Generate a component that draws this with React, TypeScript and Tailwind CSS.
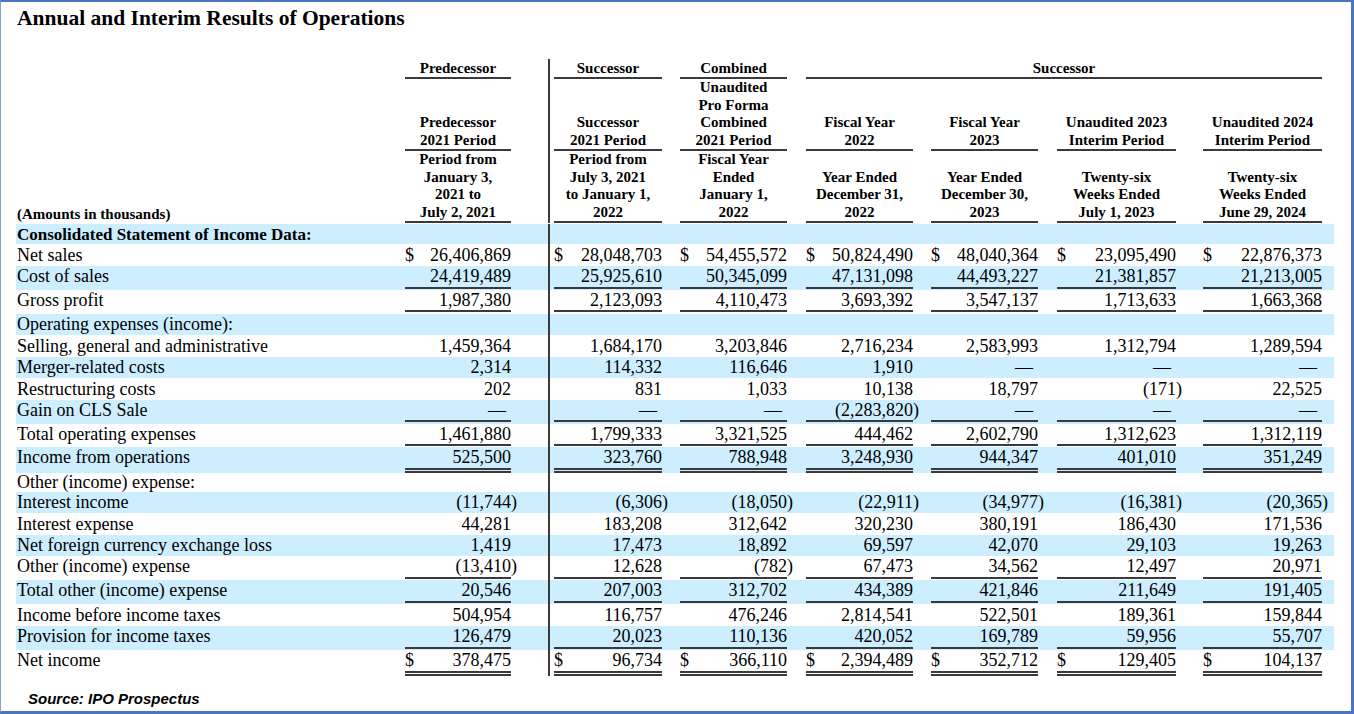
import React from "react";

type Row = {
  label: string;
  bold?: boolean;
  band?: boolean;
  th: string;
  rh: string;
  ul?: "s" | "d";
  dollar?: boolean;
  vals?: string[];
};

const COL = [
  "w-[106px]",
  "ml-[4px] w-[108px]",
  "ml-[18px] w-[107px]",
  "ml-[19px] w-[107px]",
  "ml-[18px] w-[107px]",
  "ml-[19px] w-[119px]",
  "ml-[27px] w-[119px]",
];

const ROWS: Row[] = [
  { label: "Consolidated Statement of Income Data:", bold: true, band: true, th: "h-[20px]", rh: "h-[20px]" },
  { label: "Net sales", th: "h-[22px]", rh: "h-[22px]", dollar: true, vals: ["26,406,869", "28,048,703", "54,455,572", "50,824,490", "48,040,364", "23,095,490", "22,876,373"] },
  { label: "Cost of sales", band: true, th: "h-[21px]", rh: "h-[24px]", ul: "s", vals: ["24,419,489", "25,925,610", "50,345,099", "47,131,098", "44,493,227", "21,381,857", "21,213,005"] },
  { label: "Gross profit", th: "h-[20px]", rh: "h-[24px]", ul: "s", vals: ["1,987,380", "2,123,093", "4,110,473", "3,693,392", "3,547,137", "1,713,633", "1,663,368"] },
  { label: "Operating expenses (income):", band: true, th: "h-[21px]", rh: "h-[21px]" },
  { label: "Selling, general and administrative", th: "h-[22px]", rh: "h-[22px]", vals: ["1,459,364", "1,684,170", "3,203,846", "2,716,234", "2,583,993", "1,312,794", "1,289,594"] },
  { label: "Merger-related costs", band: true, th: "h-[21px]", rh: "h-[21px]", vals: ["2,314", "114,332", "116,646", "1,910", "—", "—", "—"] },
  { label: "Restructuring costs", th: "h-[22px]", rh: "h-[22px]", vals: ["202", "831", "1,033", "10,138", "18,797", "(171)", "22,525"] },
  { label: "Gain on CLS Sale", band: true, th: "h-[20px]", rh: "h-[24px]", ul: "s", vals: ["—", "—", "—", "(2,283,820)", "—", "—", "—"] },
  { label: "Total operating expenses", th: "h-[20px]", rh: "h-[23px]", ul: "s", vals: ["1,461,880", "1,799,333", "3,321,525", "444,462", "2,602,790", "1,312,623", "1,312,119"] },
  { label: "Income from operations", band: true, th: "h-[21px]", rh: "h-[26px]", ul: "d", vals: ["525,500", "323,760", "788,948", "3,248,930", "944,347", "401,010", "351,249"] },
  { label: "Other (income) expense:", th: "h-[19px]", rh: "h-[19px]" },
  { label: "Interest income", band: true, th: "h-[21px]", rh: "h-[21px]", vals: ["(11,744)", "(6,306)", "(18,050)", "(22,911)", "(34,977)", "(16,381)", "(20,365)"] },
  { label: "Interest expense", th: "h-[22px]", rh: "h-[22px]", vals: ["44,281", "183,208", "312,642", "320,230", "380,191", "186,430", "171,536"] },
  { label: "Net foreign currency exchange loss", band: true, th: "h-[21px]", rh: "h-[21px]", vals: ["1,419", "17,473", "18,892", "69,597", "42,070", "29,103", "19,263"] },
  { label: "Other (income) expense", th: "h-[21px]", rh: "h-[24px]", ul: "s", vals: ["(13,410)", "12,628", "(782)", "67,473", "34,562", "12,497", "20,971"] },
  { label: "Total other (income) expense", band: true, th: "h-[21px]", rh: "h-[24px]", ul: "s", vals: ["20,546", "207,003", "312,702", "434,389", "421,846", "211,649", "191,405"] },
  { label: "Income before income taxes", th: "h-[22px]", rh: "h-[22px]", vals: ["504,954", "116,757", "476,246", "2,814,541", "522,501", "189,361", "159,844"] },
  { label: "Provision for income taxes", band: true, th: "h-[21px]", rh: "h-[24px]", ul: "s", vals: ["126,479", "20,023", "110,136", "420,052", "169,789", "59,956", "55,707"] },
  { label: "Net income", th: "h-[21px]", rh: "h-[26px]", ul: "d", dollar: true, vals: ["378,475", "96,734", "366,110", "2,394,489", "352,712", "129,405", "104,137"] },
];

const HB: string[][] = [
  ["Predecessor", "2021 Period"],
  ["Successor", "2021 Period"],
  ["Unaudited", "Pro Forma", "Combined", "2021 Period"],
  ["Fiscal Year", "2022"],
  ["Fiscal Year", "2023"],
  ["Unaudited 2023", "Interim Period"],
  ["Unaudited 2024", "Interim Period"],
];

const HC: string[][] = [
  ["Period from", "January 3,", "2021 to", "July 2, 2021"],
  ["Period from", "July 3, 2021", "to January 1,", "2022"],
  ["Fiscal Year", "Ended", "January 1,", "2022"],
  ["Year Ended", "December 31,", "2022"],
  ["Year Ended", "December 30,", "2023"],
  ["Twenty-six", "Weeks Ended", "July 1, 2023"],
  ["Twenty-six", "Weeks Ended", "June 29, 2024"],
];

function Divider() {
  return (
    <>
      <div className="w-[37px] shrink-0" />
      <div className="w-[2px] shrink-0 bg-[#3a3a3a]" />
    </>
  );
}

function Val({ v, dollar }: { v: string; dollar?: boolean }) {
  if (v === "—") return <span className="ml-auto pr-[5px]">—</span>;
  const neg = v.startsWith("(");
  return (
    <>
      {dollar ? <span>$</span> : <span />}
      <span className="relative">
        {neg ? v.slice(0, -1) : v}
        {neg && <span className="absolute left-full top-0">)</span>}
      </span>
    </>
  );
}

function BodyRow({ r }: { r: Row }) {
  const cells = COL.map((c, i) => (
    <React.Fragment key={i}>
      {i === 1 && <Divider />}
      <div className={`${c} shrink-0 flex flex-col`}>
        <div className={`${r.th} flex items-center justify-between`}>
          {r.vals && <Val v={r.vals[i]} dollar={r.dollar} />}
        </div>
        {r.ul === "s" && <div className="h-[2px] bg-[#3a3a3a]" />}
        {r.ul === "d" && <div className="h-[5px] border-y-2 border-[#3a3a3a]" />}
      </div>
    </React.Fragment>
  ));
  return (
    <div className={`flex w-[1318px] ${r.rh} ${r.band ? "bg-[#cceeff]" : ""}`}>
      <div
        className={`w-[389px] shrink-0 pl-[1px] flex items-center whitespace-nowrap ${r.th} ${
          r.bold ? "font-bold text-[17px]" : ""
        }`}
      >
        {r.label}
      </div>
      {cells}
    </div>
  );
}

function HeadCell({ lines, cls }: { lines: string[]; cls: string }) {
  return (
    <div className={`${cls} shrink-0 flex flex-col justify-end text-center border-b-2 border-[#3a3a3a]`}>
      {lines.map((l, i) => (
        <div key={i} className="whitespace-nowrap">
          {l}
        </div>
      ))}
    </div>
  );
}

function HeadRow({ data, label }: { data: string[][]; label?: string }) {
  return (
    <div className="flex h-[72px]">
      <div className="w-[389px] shrink-0 pl-[1px] flex items-end whitespace-nowrap">{label}</div>
      {data.map((lines, i) => (
        <React.Fragment key={i}>
          {i === 1 && <Divider />}
          <HeadCell lines={lines} cls={COL[i]} />
        </React.Fragment>
      ))}
    </div>
  );
}

export default function App() {
  return (
    <div className="w-[1354px] h-[714px] bg-white border-t-2 border-r-[3px] border-b-[3px] border-l border-[#4a74c4] border-l-[#86a2da] overflow-hidden font-['Liberation_Serif','Times_New_Roman',serif] text-black">
      <div className="pl-[15px]">
        <div className="pt-[4px] pl-[1px] h-[28px] text-[21.5px] leading-[24px] font-bold whitespace-nowrap">
          Annual and Interim Results of Operations
        </div>
        <div className="mt-[29px] text-[15px] leading-[17.5px] font-bold">
          <div className="flex h-[20px]">
            <div className="w-[389px] shrink-0" />
            <HeadCell lines={["Predecessor"]} cls={COL[0]} />
            <Divider />
            <HeadCell lines={["Successor"]} cls={COL[1]} />
            <HeadCell lines={["Combined"]} cls={COL[2]} />
            <HeadCell lines={["Successor"]} cls="ml-[19px] w-[516px]" />
          </div>
          <HeadRow data={HB} />
          <HeadRow data={HC} label="(Amounts in thousands)" />
        </div>
        <div className="mt-[1px] text-[18px] leading-[21px]">
          {ROWS.map((r, i) => (
            <BodyRow key={i} r={r} />
          ))}
        </div>
        <div className="mt-[13px] ml-[12px] font-['Liberation_Sans',Arial,sans-serif] font-bold italic text-[15px] leading-[20px]">
          Source: IPO Prospectus
        </div>
      </div>
    </div>
  );
}
